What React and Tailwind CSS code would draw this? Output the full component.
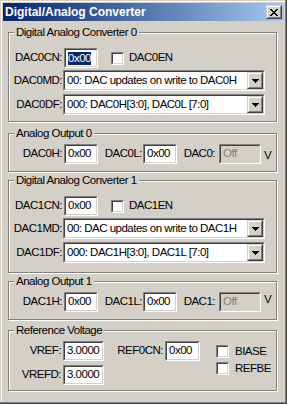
import React from "react";

function Sunken({ className = "", inner = "", children }) {
  return (
    <div className={`border border-t-[#808080] border-l-[#808080] border-b-white border-r-white ${className}`}>
      <div className={`h-full w-full border border-t-[#404040] border-l-[#404040] border-b-[#d4d0c8] border-r-[#d4d0c8] ${inner}`}>
        {children}
      </div>
    </div>
  );
}

function Raised({ className = "", inner = "", children }) {
  return (
    <div className={`border border-t-[#d4d0c8] border-l-[#d4d0c8] border-b-[#404040] border-r-[#404040] ${className}`}>
      <div className={`h-full w-full border border-t-white border-l-white border-b-[#808080] border-r-[#808080] bg-[#d4d0c8] ${inner}`}>
        {children}
      </div>
    </div>
  );
}

function Edit({ w, children, selected, readOnly }) {
  return (
    <Sunken
      className={`h-[20px] ${w}`}
      inner={`flex items-center pl-[2px] ${readOnly ? "bg-[#d4d0c8] text-[#808080]" : "bg-white"}`}
    >
      {selected ? <span className="bg-[#0a246a] text-white leading-[13px]">{children}</span> : children}
    </Sunken>
  );
}

function Checkbox() {
  return <Sunken className="h-[13px] w-[13px] shrink-0" inner="bg-white" />;
}

function Arrow() {
  return (
    <svg width="7" height="4" viewBox="0 0 7 4" shapeRendering="crispEdges">
      <path d="M0 0h7v1h-1v1h-1v1h-1v1h-1v-1h-1v-1h-1v-1h-1z" fill="#000" />
    </svg>
  );
}

function Select({ children }) {
  return (
    <Sunken className="h-[21px] w-[202px]" inner="flex bg-white">
      <div className="flex-1 flex items-center pl-[2px] whitespace-nowrap overflow-hidden">{children}</div>
      <Raised className="w-[16px] h-full" inner="flex items-center justify-center">
        <Arrow />
      </Raised>
    </Sunken>
  );
}

function Group({ title, className = "", children }) {
  return (
    <div
      className={`relative ml-[5px] w-[269px] border border-[#808080] shadow-[inset_1px_1px_0_#ffffff,1px_1px_0_#ffffff] ${className}`}
    >
      <div className="absolute left-[5px] top-[-7px] px-[2px] bg-[#d4d0c8] leading-[13px] whitespace-nowrap">
        {title}
      </div>
      {children}
    </div>
  );
}

function Label({ w, pr = "pr-[1px]", children }) {
  return <div className={`${w} ${pr} text-right whitespace-nowrap shrink-0`}>{children}</div>;
}

function DacGroup({ n, className, selected }) {
  return (
    <Group title={`Digital Analog Converter ${n}`} className={className}>
      <div className="flex items-center h-[20px]">
        <Label w="w-[54px]">{`DAC${n}CN:`}</Label>
        <div className="ml-px">
          <Edit w="w-[34px]" selected={selected}>0x00</Edit>
        </div>
        <div className="ml-[13px]">
          <Checkbox />
        </div>
        <span className="ml-[5px]">{`DAC${n}EN`}</span>
      </div>
      <div className="flex items-center mt-[2px]">
        <Label w="w-[54px]">{`DAC${n}MD:`}</Label>
        <Select>{`00: DAC updates on write to DAC${n}H`}</Select>
      </div>
      <div className="flex items-center mt-[3px]">
        <Label w="w-[54px]">{`DAC${n}DF:`}</Label>
        <Select>{`000: DAC${n}H[3:0], DAC${n}L [7:0]`}</Select>
      </div>
    </Group>
  );
}

function OutGroup({ n, className, vClass }) {
  return (
    <Group title={`Analog Output ${n}`} className={className}>
      <div className="flex items-center h-[20px]">
        <Label w="w-[54px]">{`DAC${n}H:`}</Label>
        <div className="ml-px">
          <Edit w="w-[34px]">0x00</Edit>
        </div>
        <Label w="w-[45px]">{`DAC${n}L:`}</Label>
        <Edit w="w-[34px]">0x00</Edit>
        <Label w="w-[42px]" pr="pr-[4px]">{`DAC${n}:`}</Label>
        <Edit w="w-[42px]" readOnly>Off</Edit>
        <span className={`ml-[3px] ${vClass}`}>V</span>
      </div>
    </Group>
  );
}

function CloseGlyph() {
  const rows = ["11000011", "01100110", "00111100", "00011000", "00111100", "01100110", "11000011"];
  const rects = [];
  rows.forEach((r, y) =>
    r.split("").forEach((c, x) => {
      if (c === "1") rects.push(<rect key={`${x}-${y}`} x={x} y={y} width="1" height="1" />);
    })
  );
  return (
    <svg width="8" height="7" viewBox="0 0 8 7" shapeRendering="crispEdges" fill="#000">
      {rects}
    </svg>
  );
}

export default function App() {
  return (
    <div className="w-[287px] h-[404px] bg-[#d4d0c8] p-[3px] shadow-[inset_-1px_-1px_0_#404040,inset_-2px_-2px_0_#808080,inset_1px_1px_0_#d4d0c8,inset_2px_2px_0_#ffffff] font-['Liberation_Sans',Arial,sans-serif] text-[11.5px] tracking-[-0.5px] text-black flex flex-col overflow-hidden">
      <div className="h-[18px] shrink-0 flex items-center justify-between bg-linear-to-r from-[#0a246a] to-[#a6caf0] pl-[2px] pr-[2px]">
        <span className="text-white font-bold text-[12px] tracking-normal leading-[14px] whitespace-nowrap">Digital/Analog Converter</span>
        <Raised className="w-[16px] h-[14px]" inner="flex items-center justify-center">
          <CloseGlyph />
        </Raised>
      </div>

      <DacGroup n={0} className="mt-[11px] pt-[15px] pb-[6px]" selected />
      <OutGroup n={0} className="mt-[11px] pt-[10px] pb-[7px]" vClass="mt-[3px]" />
      <DacGroup n={1} className="mt-[8px] pt-[15px] pb-[9px]" />
      <OutGroup n={1} className="mt-[8px] pt-[10px] pb-[7px]" vClass="-mt-[4px]" />

      <Group title="Reference Voltage" className="mt-[10px] pt-[10px] pb-[5px]">
        <div className="flex items-start">
          <div className="flex flex-col gap-[4px]">
            <div className="flex items-center h-[20px]">
              <Label w="w-[54px]" pr="pr-[2px]">VREF:</Label>
              <Edit w="w-[41px]">3.0000</Edit>
            </div>
            <div className="flex items-center h-[20px]">
              <Label w="w-[54px]" pr="pr-[2px]">VREFD:</Label>
              <Edit w="w-[41px]">3.0000</Edit>
            </div>
          </div>
          <div className="flex items-center h-[20px]">
            <Label w="w-[61px]" pr="pr-[2px]">REF0CN:</Label>
            <Edit w="w-[35px]">0x00</Edit>
          </div>
          <div className="flex flex-col ml-[16px] pt-[4px] gap-[4px]">
            <div className="flex items-center h-[13px]">
              <Checkbox />
              <span className="ml-[6px] leading-[13px]">BIASE</span>
            </div>
            <div className="flex items-center h-[13px]">
              <Checkbox />
              <span className="ml-[6px] leading-[13px]">REFBE</span>
            </div>
          </div>
        </div>
      </Group>
    </div>
  );
}
